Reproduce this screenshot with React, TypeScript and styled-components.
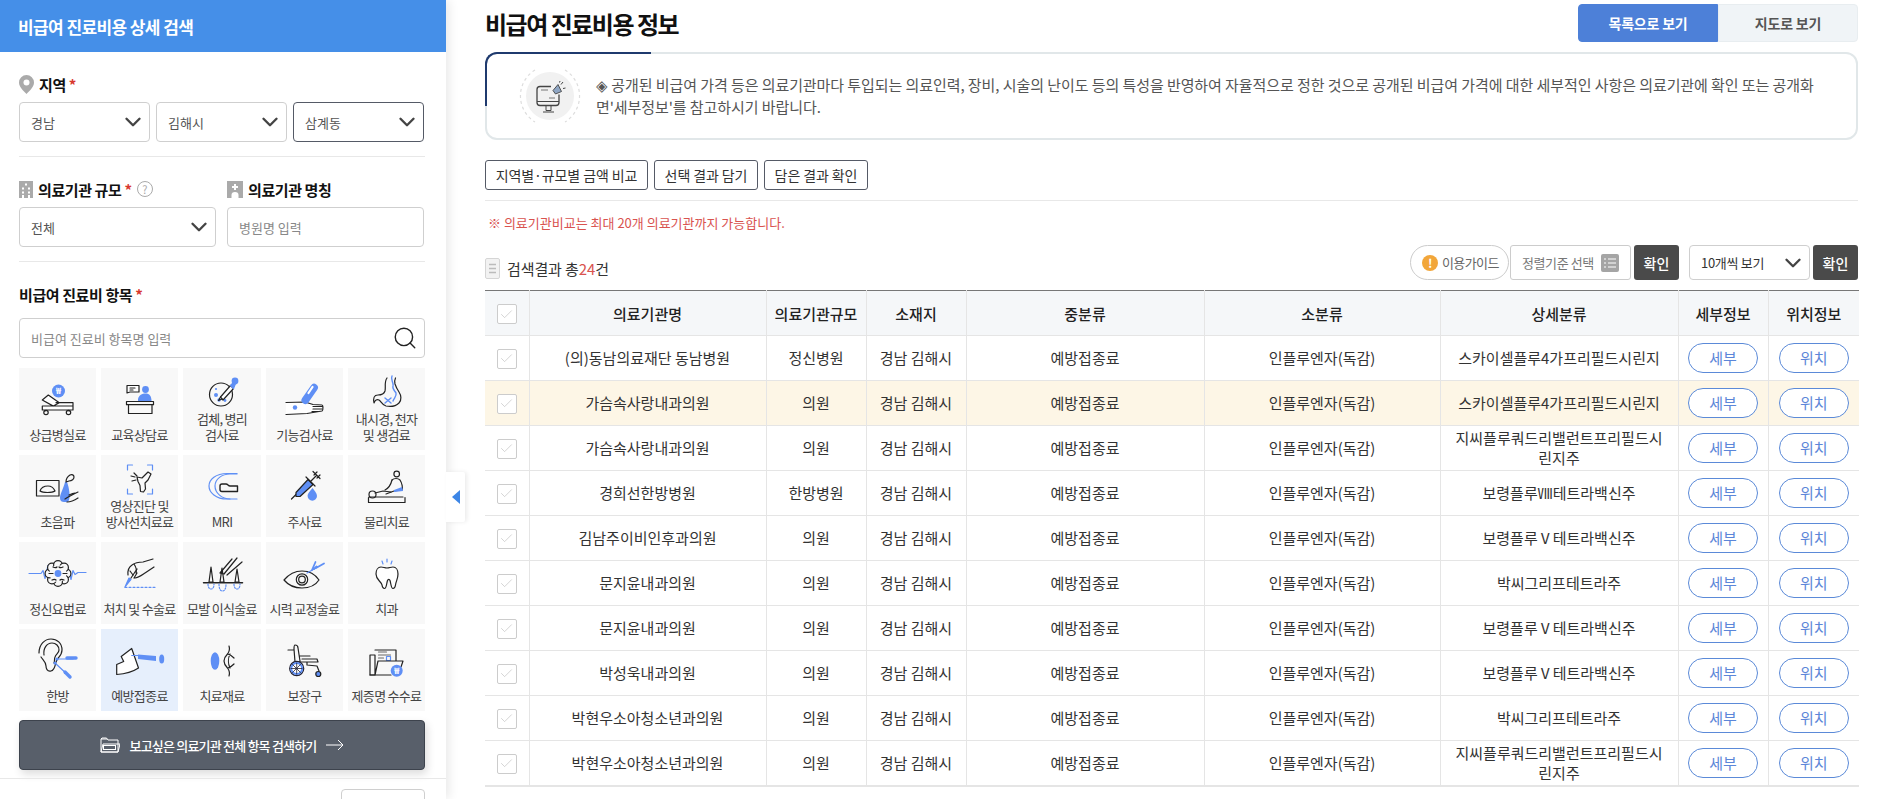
import * as React from 'react';
import styled, { createGlobalStyle } from 'styled-components';
import { ChevronDown, Search, Check } from 'lucide-react';

const BLUE = '#5f8ff5';

const GlobalStyle = createGlobalStyle`
  html, body {
    margin: 0;
    height: 100%;
    overflow: hidden;
    background: #fff;
    font-family: "Noto Sans CJK KR", "Noto Sans", sans-serif;
    color: #333;
  }
  * { box-sizing: border-box; }
`;

const Page = styled.div`
  display: flex;
  height: 799px;
  overflow: hidden;
`;

/* ---------- sidebar ---------- */

const Sidebar = styled.aside`
  position: relative;
  flex: 0 0 445px;
  background: #fff;
  box-shadow: 3px 0 10px rgba(0, 0, 0, 0.09);
`;

const SideHeader = styled.h2`
  margin: 0;
  height: 52px;
  padding-left: 18px;
  display: flex;
  align-items: center;
  background: #458fe8;
  color: #fff;
  font-size: 17px;
  font-weight: 700;
  letter-spacing: -0.6px;
`;

const SideBody = styled.div`
  padding: 20px 21px 0 19px;
`;

const Section = styled.section`
  padding-bottom: 14px;
  border-bottom: 1px solid #e8e8e8;
  margin-bottom: 20px;
`;

const Label = styled.div<{ $gap?: number }>`
  display: flex;
  align-items: center;
  height: 24px;
  gap: 5px;
  margin-bottom: ${p => p.$gap ?? 6}px;
  font-size: 15px;
  font-weight: 700;
  letter-spacing: -0.4px;
  color: #111;
`;

const Star = styled.span`
  color: #d8382e;
  font-weight: 700;
  margin-left: -2px;
`;

const Row = styled.div<{ $cols: string; $gap: number }>`
  display: grid;
  grid-template-columns: ${p => p.$cols};
  column-gap: ${p => p.$gap}px;
`;

const SelectBox = styled.div<{ $active?: boolean }>`
  height: 40px;
  display: flex;
  align-items: center;
  justify-content: space-between;
  padding: 0 3px 0 11px;
  background: #fff;
  border: 1px solid ${p => (p.$active ? '#555a66' : '#cfcfcf')};
  border-radius: 4px;
  font-size: 13px;
  color: #555;
  svg { color: #444; flex: none; }
`;

const TextInput = styled.input`
  width: 100%;
  height: 40px;
  padding: 0 11px;
  border: 1px solid #cfcfcf;
  border-radius: 4px;
  font: inherit;
  font-size: 13px;
  outline: none;
  &::placeholder { color: #888; }
`;

const SearchField = styled.div`
  display: flex;
  align-items: center;
  height: 40px;
  padding-right: 6px;
  margin-bottom: 10px;
  border: 1px solid #cfcfcf;
  border-radius: 4px;
  input {
    flex: 1;
    border: 0;
    outline: 0;
    padding: 0 11px;
    font: inherit;
    font-size: 13px;
    &::placeholder { color: #888; }
  }
  svg { color: #222; }
`;

const Grid = styled.div`
  display: grid;
  grid-template-columns: 77px 77px 78px 77px 77px;
  grid-auto-rows: 82px;
  gap: 5px;
`;

const Cell = styled.div<{ $selected?: boolean }>`
  display: flex;
  flex-direction: column;
  align-items: center;
  padding-bottom: 7px;
  background: ${p => (p.$selected ? '#e6effc' : '#f8f8f8')};
`;

const CellLabel = styled.div`
  margin-top: auto;
  font-size: 13px;
  line-height: 16px;
  letter-spacing: -0.7px;
  text-align: center;
  white-space: pre-line;
  color: #444;
`;

const IconSvg = styled.svg`
  flex: none;
  display: block;
  overflow: visible;
  fill: none;
  stroke: #222;
  stroke-width: 1.2;
  stroke-linecap: round;
  stroke-linejoin: round;
`;

const AllButton = styled.button`
  display: flex;
  align-items: center;
  justify-content: center;
  gap: 9px;
  width: 100%;
  height: 50px;
  margin-top: 9px;
  background: #585f6a;
  border: 1px solid #3d434d;
  border-radius: 4px;
  box-shadow: 2px 4px 8px rgba(0, 0, 0, 0.14);
  color: #fff;
  font: inherit;
  font-size: 13px;
  font-weight: 500;
  letter-spacing: -0.8px;
`;

const SideFooter = styled.div`
  display: flex;
  justify-content: flex-end;
  margin-top: 8px;
  padding: 10px 21px 0 0;
  border-top: 1px solid #e8e8e8;
`;

const FooterSelect = styled(SelectBox)`
  width: 84px;
  justify-content: flex-end;
`;

const CollapseTab = styled.div`
  position: absolute;
  left: 100%;
  top: 472px;
  width: 19px;
  height: 50px;
  display: flex;
  align-items: center;
  justify-content: center;
  background: #fff;
  box-shadow: 2px 0 4px rgba(0, 0, 0, 0.08);
  border-radius: 0 2px 2px 0;
`;

const TabArrow = styled.span`
  width: 0;
  height: 0;
  border-top: 7px solid transparent;
  border-bottom: 7px solid transparent;
  border-right: 8px solid #3d86e6;
`;

/* ---------- main ---------- */

const Main = styled.main`
  flex: 1;
  min-width: 0;
  padding: 4px 20px 0 39px;
`;

const TitleRow = styled.div`
  display: flex;
  align-items: center;
  justify-content: space-between;
  height: 38px;
`;

const Title = styled.h1`
  margin: 0;
  font-size: 24px;
  font-weight: 700;
  letter-spacing: -1.5px;
  color: #111;
`;

const ViewTabs = styled.div`
  display: flex;
`;

const ViewTab = styled.button<{ $on?: boolean }>`
  width: 140px;
  height: 38px;
  font: inherit;
  font-size: 14px;
  font-weight: 700;
  letter-spacing: -0.2px;
  border-radius: ${p => (p.$on ? '4px 0 0 4px' : '0 4px 4px 0')};
  border: 1px solid ${p => (p.$on ? '#4d80d8' : '#e8edf0')};
  background: ${p => (p.$on ? '#4d80d8' : '#f0f4f7')};
  color: ${p => (p.$on ? '#fff' : '#555')};
`;

const Notice = styled.div`
  position: relative;
  display: flex;
  align-items: center;
  height: 88px;
  margin-top: 10px;
  padding: 0 38px 0 32px;
  border: 2px solid #e1e7e9;
  border-radius: 12px;
  font-size: 15px;
  line-height: 22px;
  color: #555;
  letter-spacing: -0.07px;
  &::before {
    content: '';
    position: absolute;
    left: -2px;
    top: -2px;
    width: 164px;
    height: 52px;
    border-top: 2px solid #1f3a6e;
    border-left: 2px solid #1f3a6e;
    border-top-left-radius: 12px;
    pointer-events: none;
  }
`;

const NoticeIcon = styled.div`
  flex: none;
  width: 62px;
  height: 62px;
  margin-right: 15px;
`;

const NoticeText = styled.p`
  margin: 0;
  flex: 1;
  word-break: break-all;
`;

const Actions = styled.div`
  display: flex;
  gap: 6px;
  margin-top: 20px;
  padding-bottom: 10px;
  border-bottom: 1px solid #e8e8e8;
`;

const ActionButton = styled.button<{ $w: number }>`
  width: ${p => p.$w}px;
  height: 30px;
  padding: 0;
  background: #fff;
  border: 1px solid #555a66;
  border-radius: 3px;
  font: inherit;
  font-size: 14px;
  letter-spacing: -0.1px;
  color: #333;
`;

const Warning = styled.p`
  margin: 12px 0 0 3px;
  font-size: 13px;
  line-height: 19px;
  color: #d9534f;
`;

const ToolRow = styled.div`
  display: flex;
  align-items: center;
  justify-content: space-between;
  height: 35px;
  margin-top: 13px;
  margin-bottom: 10px;
`;

const ResultCount = styled.div`
  display: flex;
  align-items: center;
  gap: 6px;
  padding-top: 11px;
  font-size: 15px;
  letter-spacing: -0.1px;
  em { color: #d9534f; font-style: normal; }
`;

const Tools = styled.div`
  display: flex;
  align-items: center;
`;

const GuidePill = styled.div`
  display: flex;
  align-items: center;
  gap: 4px;
  width: 99px;
  height: 35px;
  padding-left: 11px;
  border: 1px solid #ccc;
  border-radius: 18px;
  font-size: 13px;
  letter-spacing: -0.6px;
  color: #666;
`;

const GuideMark = styled.span`
  width: 16px;
  height: 16px;
  border-radius: 50%;
  background: #f2a63a;
  color: #fff;
  font-size: 12px;
  font-weight: 700;
  line-height: 16px;
  text-align: center;
`;

const SortBox = styled.div`
  display: flex;
  align-items: center;
  justify-content: space-between;
  width: 121px;
  height: 35px;
  margin-left: 1px;
  padding: 0 11px;
  border: 1px solid #ccc;
  border-radius: 3px;
  font-size: 13px;
  letter-spacing: -0.4px;
  color: #777;
`;

const SortMark = styled.span`
  flex: none;
  width: 18px;
  height: 18px;
  display: flex;
  align-items: center;
  justify-content: center;
  border-radius: 2px;
  background: #a5a5a5;
`;

const ConfirmButton = styled.button`
  width: 45px;
  height: 35px;
  margin-left: 3px;
  background: #4a4a4a;
  border: 0;
  border-radius: 3px;
  color: #fff;
  font: inherit;
  font-size: 14px;
  font-weight: 500;
`;

const PageSize = styled(SelectBox)`
  width: 121px;
  height: 35px;
  margin-left: 10px;
  font-size: 13px;
  letter-spacing: -0.3px;
  color: #333;
`;

const Table = styled.table`
  width: 100%;
  table-layout: fixed;
  border-collapse: collapse;
  border-top: 1px solid #777;
  border-bottom: 2px solid #e5e5e5;
  font-size: 15px;
`;

const Th = styled.th`
  height: 45px;
  padding: 0;
  background: #f5f7f9;
  border: 1px solid #e5e5e5;
  border-top: 0;
  font-weight: 500;
  color: #222;
  &:first-child { border-left: 0; }
  &:last-child { border-right: 0; }
`;

const Tr = styled.tr<{ $hot?: boolean }>`
  background: ${p => (p.$hot ? '#fdf6e6' : '#fff')};
`;

const Td = styled.td`
  height: 45px;
  padding: 0 15px;
  border: 1px solid #e5e5e5;
  text-align: center;
  line-height: 20px;
  word-break: break-all;
  color: #333;
  &:first-child { border-left: 0; padding: 0; }
  &:last-child { border-right: 0; }
`;

const TightTd = styled(Td)`
  padding: 0;
`;

const CheckMark = styled.span`
  display: inline-flex;
  align-items: center;
  justify-content: center;
  vertical-align: middle;
  width: 20px;
  height: 20px;
  background: #fff;
  border: 1px solid #ccc;
  border-radius: 2px;
  svg { color: #bbb; }
`;

const PillButton = styled.button`
  display: block;
  margin: 0 auto;
  width: 70px;
  height: 30px;
  padding: 0;
  background: #fff;
  border: 1px solid #5b8ad8;
  border-radius: 15px;
  font: inherit;
  font-size: 15px;
  color: #5c86d8;
`;

const HelpMark = styled.span`
  width: 16px;
  height: 16px;
  border: 1px solid #aaa;
  border-radius: 50%;
  color: #aaa;
  font-size: 11px;
  font-weight: 400;
  line-height: 14px;
  text-align: center;
`;

/* ---------- drawings ---------- */

const Icon: React.FC<{ children: React.ReactNode }> = ({ children }) => (
  <IconSvg width="77" height="42" viewBox="0 0 77 42">{children}</IconSvg>
);

const Coin: React.FC<{ cx: number; cy: number; r: number }> = ({ cx, cy, r }) => (
  <>
    <circle cx={cx} cy={cy} r={r} fill={BLUE} stroke="none" />
    <text x={cx} y={cy + 3} fontSize="8.5" fontWeight="700" textAnchor="middle" fill="#fff" stroke="none">₩</text>
  </>
);

const BRAIN_LOBES = [0, 45, 90, 135, 180, 225, 270, 315];

const ICONS: Record<string, React.ReactNode> = {
  ward: (
    <>
      <Coin cx={39.5} cy={23} r={6.5} />
      <path d="M23.3 32l6-5 11 7.700-6 3.300zM37 34.700h17V38H34M23.3 38H54v4H23.3zM26 42v1M50 42v1M25 33l9 5" fill="#fff" />
      <circle cx={27} cy={44.5} r={2.2} />
      <circle cx={49.5} cy={44.5} r={2.2} />
    </>
  ),
  counsel: (
    <>
      <path d="M26 17.500h12v6.500h-9l-3 1zM29 20h5M29 22h3" fill="#fff" />
      <circle cx={44.5} cy={21.5} r={3.4} fill={BLUE} stroke="none" />
      <path d="M37 31c1-4 4-5.500 7.500-5.500 4 0 6 2.500 6 8H37z" fill={BLUE} stroke="none" />
      <path d="M25.500 33.500h27v3.200h-27zM27.500 36.700V45.500H51V36.700" />
    </>
  ),
  specimen: (
    <>
      <circle cx={37} cy={26.5} r={11.5} />
      <circle cx={32} cy={27} r={2} fill={BLUE} stroke="none" />
      <circle cx={35} cy={32} r={1.7} fill={BLUE} stroke="none" />
      <circle cx={41} cy={32.5} r={1.4} fill={BLUE} stroke="none" />
      <circle cx={32} cy={21} r={1.1} fill={BLUE} stroke="none" />
      <path d="M36.500 29l10-11.500 3 3L39 32z" fill="#fff" />
      <path d="M36.500 29l-2 3.500 3.500-1.500" />
      <path d="M46.500 17.500l3.500-3.500 1.500 1.500-2 5z" fill={BLUE} stroke={BLUE} />
      <circle cx={51} cy={13} r={3.4} fill={BLUE} stroke="none" />
    </>
  ),
  function: (
    <>
      <path d="M20 34.500l19-.5 8 2.500 9 .5c1 0 1.500 5 0 6l-9 1.500-6 1-21 1" fill="#fff" />
      <path d="M47 38.500h9.500M47 41h9M46 43.500h6" />
      <rect x={-3.8} y={-11} width={7.6} height={23} rx={3.8} transform="translate(44 25.500) rotate(35)" fill={BLUE} stroke="none" />
      <path d="M42.500 25l4-6" stroke="#fff" strokeWidth="2.2" />
      <circle cx={29} cy={39.5} r={2.2} fill={BLUE} stroke="none" />
    </>
  ),
  scope: (
    <>
      <path d="M39 10c-3 4-1 9-2 13-1 3-4 4-7 4-4 0-5 3-4 8 1-3 3-4 5-3 2 1 3 5 7 6 5 1 10 0 13-3 3-3 2-8 0-11-2-3-3-5-4-8-.500-2-.500-4 .500-6" />
      <path d="M44 8c-2 4 2 6 1 10-1 3 2 5 3 7 1 3-2 5-3 8M37 30l6 5M43 30l-6 5" stroke={BLUE} strokeWidth="1.400" />
    </>
  ),
  ultrasound: (
    <>
      <rect x={17.5} y={25.5} width={22.5} height={15.5} />
      <path d="M21 36c1-3 3-5 8-5s6 3 7 5c-3 2-12 2-15 0z" />
      <path d="M46 27c-1 5-5 12-5 16 0 3 2 4 4 4h3c4 0 3-12 0-20z" fill={BLUE} stroke="none" />
      <path d="M47 27c0-3 1-5 4-7 2-1 4 0 4 2s-2 4-5 4zM46 44c4-2 8-5 13-7M50 40c2-1 4-2 6-2M48 47c4 0 8-2 11-4" />
    </>
  ),
  imaging: (
    <>
      <path d="M26.500 15v-5h5M46.500 10h5v5M26.500 34v5h5M46.500 39h5v-5" stroke={BLUE} />
      <path d="M36 22l5 1 6-6 3 2-3 6-3 3 .5 6-2 3-3-.5-.5-6-2-4zM33 18l3 3M30 21l4 1M31 26l4-1" />
    </>
  ),
  mri: (
    <>
      <path d="M53 18.500H43c-11 0-18 6-18 12.500s7 13 18 13h10" stroke={BLUE} />
      <path d="M53 19H46c-8 0-15 5-15 12s7 13 15 13" stroke={BLUE} />
      <path d="M36 31c0-1.500 1-2 2-2h4c2 0 2 2 4 2h7.500v5.500H38c-1 0-2-1-2-2z" strokeWidth="1.400" fill="#f8f8f8" />
    </>
  ),
  injection: (
    <>
      <path d="M25.500 44l5-5" />
      <path d="M30 37.500l12-13 5 5-13 12-4 0z" fill={BLUE} />
      <path d="M40 22l9 9M45 26l5-5M47 16.500l7 7M51 17l-3 3M54 20l-3 3" />
      <path d="M46.500 33c2 3 4.500 5 4.500 8a4.700 4.700 0 01-9.400 0c0-3 2.900-5 4.900-8z" fill={BLUE} stroke="none" />
    </>
  ),
  physical: (
    <>
      <circle cx={48.7} cy={19} r={2.8} />
      <path d="M44 25c2-2 6-2 8 0 2 3 3 8 2 10l-8 1-8 3" fill="#f8f8f8" />
      <path d="M46 35l8-3 1 4-9 1z" fill={BLUE} stroke="none" />
      <path d="M44 25c-1 4-3 8-7 10" />
      <circle cx={24.5} cy={39.5} r={3.5} />
      <path d="M27 38l8-2 8 1M21 42h34M20.500 42.500v5h36.500v-5" />
    </>
  ),
  mental: (
    <>
      <path d="M10 31.500h12l2-3 2 8 3-13 2 8M47 31.500l2-6 3 12 2-9 2 4 3-2 8 0" stroke={BLUE} />
      {BRAIN_LOBES.map(deg => (
        <circle
          key={deg}
          cx={39 + 8.5 * Math.cos((deg * Math.PI) / 180)}
          cy={31.5 + 8.5 * Math.sin((deg * Math.PI) / 180)}
          r={4.4}
          fill="#f8f8f8"
        />
      ))}
      <circle cx={39} cy={31.5} r={8.6} fill="#f8f8f8" stroke="none" />
      <path d="M34 25c2 1 3 1 4 0M44 25c-2 1-3 1-4 0M33 38c2-1 3-1 4 0M45 38c-2-1-3-1-4 0M30 31.500h4M44 31.500h4" />
      <circle cx={39} cy={31.5} r={3.4} fill={BLUE} stroke="none" />
    </>
  ),
  surgery: (
    <>
      <path d="M24 45l4-9 2 1.500z" fill={BLUE} stroke={BLUE} />
      <path d="M30 36l6-9" />
      <path d="M27 33c-.5-4 1-8 4-10 4-3 8-3 11-3l10-3M34 36c3 0 7-3 10-5l9-6M29 29l3 4M33 22c2 3 3 6 2 9M36 31l-3 5" />
      <path d="M24 45.300h32" stroke={BLUE} strokeDasharray="2 2" />
    </>
  ),
  hair: (
    <>
      <path d="M19.500 40.800h39" strokeWidth="1.500" />
      <path d="M25 40l2-15 2 15zM36 40l2-14 2 14zM51 40l2-13 2 13z" />
      <path d="M36 31l12-14M40 32l13-16M43 33l15-13M36 31l4 1" />
      <path d="M24 42c0 3 1 5 3 5s3-2 3-5M35 42c0 4 1 7 3.500 7S42 46 42 42M50 42c0 3 1 5 3 5s3-2 3-5" stroke={BLUE} strokeDasharray="1.500 1.500" />
    </>
  ),
  vision: (
    <>
      <path d="M18 38c5-6 11-9 18-9s13 3 17 9c-4 6-10 8-17 8s-13-2-18-8z" />
      <circle cx={36} cy={37.5} r={5.7} />
      <circle cx={36} cy={37.5} r={3.3} />
      <path d="M41 31l9-5" stroke={BLUE} />
      <path d="M46 28l3.500-8M50 26l8-4.500M48 27l2.500-2.500" stroke={BLUE} strokeWidth="1.800" />
    </>
  ),
  dental: (
    <>
      <path d="M34 19l1 3M39 17v3M44 19l-1 3" stroke={BLUE} />
      <path d="M33 25c2 0 4 1 6 1s4-1 6-1c3 0 5 3 5 7 0 5-2 7-2.500 11-.3 2-1 3.500-2.500 3.500-2 0-2-5-3-8-.5-1.500-2-1.500-2.500 0-1 3-1 8-3 8-1.500 0-2.200-1.500-2.500-3.500C33 39 28 38 28 32c0-4 2-7 5-7z" fill="#fff" />
    </>
  ),
  oriental: (
    <>
      <path d="M20 24c0-9 6-14 12-14s11 4 11 11c0 6-5 8-6 12-1 3-1 8-5 9s-5-3-5-5c0-4-3-6-5-9" fill="#f8f8f8" />
      <path d="M25 26c-1-7 3-12 8-12 4 0 7 3 7 7 0 3-3 4-4 7-1 2 0 4-1 6" />
      <path d="M38 30h16" stroke={BLUE} />
      <path d="M48 29h9" stroke={BLUE} strokeWidth="3.400" />
      <circle cx={38} cy={30} r={1.6} fill={BLUE} stroke="none" />
      <circle cx={36} cy={34} r={1.6} fill={BLUE} stroke="none" />
      <path d="M36 34l14 13" stroke={BLUE} />
      <path d="M46 43l5 5" stroke={BLUE} strokeWidth="3.400" />
    </>
  ),
  vaccine: (
    <>
      <path d="M15.700 35.500l7-3-2.500-5 10.500-8 6.800 19.500c-6 4-15 6-21.800 6.500z" fill="#fff" />
      <path d="M30.700 26.500h8" stroke={BLUE} />
      <path d="M37 25.500l18 1.500v5l-18-2z" fill={BLUE} stroke="none" />
      <ellipse cx={60.7} cy={30} rx={2.5} ry={4.5} fill={BLUE} stroke="none" />
    </>
  ),
  material: (
    <>
      <ellipse cx={31} cy={32} rx={4.3} ry={8.7} fill={BLUE} stroke="none" />
      <path d="M45 17c1 3 0 6-1.500 8-2 2-3.500 4-3.500 7s1.500 5 3.500 7c1.500 2 2.500 5 1.500 8M44 25c3 1 5 3 6 4M44 39c3-1 5-3 6-4M46 25c-2 4-2 10 0 14" />
    </>
  ),
  gear: (
    <>
      <path d="M22 21h6M29 16c2 0 3 1 3 3l2 13M29 16c-1 0-1 2-1 4l1 13M34 27h10M36 30h15l1 3H33l8 0v3l10 1 2 5" />
      <circle cx={30.7} cy={39.5} r={7} stroke="#223" strokeWidth="1.300" fill="#fff" />
      <circle cx={30.7} cy={39.5} r={5.5} stroke={BLUE} strokeWidth="2" />
      <path d="M26.500 35.500l8 8M34.500 35.500l-8 8M30.700 34v11M25 39.500h11" stroke="#223" strokeWidth=".8" />
      <circle cx={52.3} cy={45} r={2.5} fill={BLUE} />
    </>
  ),
  document: (
    <>
      <path d="M27 21h21v20" />
      <path d="M30.500 23h8M30.500 26h12M30.500 29h5" stroke="#666" />
      <rect x={38.5} y={27.5} width={4} height={4} stroke={BLUE} />
      <path d="M22 26h5v20h-5zM27 46l3-14h25l-2 6" fill="#f8f8f8" />
      <path d="M22 46h21" />
      <Coin cx={48.7} cy={41.7} r={6} />
    </>
  ),
};

const PinIcon = () => (
  <svg width="15" height="19" viewBox="0 0 15 19">
    <path d="M7.500 0A7.500 7.500 0 000 7.500C0 12 4.500 16 7.500 19c3-3 7.500-7 7.500-11.500A7.500 7.500 0 007.500 0z" fill="#aaa" />
    <circle cx="7.5" cy="7.5" r="3" fill="#fff" />
  </svg>
);

const BuildingIcon = () => (
  <svg width="14" height="17" viewBox="0 0 14 17">
    <rect width="14" height="17" fill="#aaa" />
    <path d="M6 2.500h2v2H6zM3 6.500h2v2H3zM9 6.500h2v2H9zM3 10.500h2v2H3zM9 10.500h2v2H9zM3 14h2v3H3zM9 14h2v3H9z" fill="#fff" />
  </svg>
);

const HospitalIcon = () => (
  <svg width="16" height="17" viewBox="0 0 16 17">
    <rect width="16" height="17" fill="#aaa" />
    <path d="M7 3h2v2h2v2H9v2H7V7H5V5h2zM4.500 17v-3a3.500 3 0 017 0v3z" fill="#fff" />
  </svg>
);

const DocIcon = () => (
  <svg width="16" height="21" viewBox="0 0 16 21" fill="none">
    <rect x=".5" y=".5" width="14" height="20" rx="1.500" fill="#f2f2f2" stroke="#d5d5d5" />
    <path d="M4 6.500h7M4 10.500h7M4 14.500h7" stroke="#bbb" strokeWidth="1.300" />
  </svg>
);

const FolderIcon = () => (
  <svg width="20" height="16" viewBox="0 0 20 16" fill="none" stroke="#fff" strokeWidth="1">
    <path d="M1 4V15h17V3H8L6.500 1H2L1 2zM1 2h6M3 7h17l-2 8H1z" />
    <rect x="3.5" y="8.5" width="12" height="4" />
  </svg>
);

const LongArrow = () => (
  <svg width="18" height="12" viewBox="0 0 18 12" fill="none" stroke="#fff" strokeWidth="1">
    <path d="M0 6h17M12 1l5 5-5 5" />
  </svg>
);

const NoticeDrawing = () => (
  <NoticeIcon>
    <svg width="62" height="62" viewBox="0 0 62 62" fill="none">
      <path d="M16 5A30.500 30.500 0 0016 57M46 5a30.500 30.500 0 010 52" stroke="#ddd" strokeWidth="1.200" strokeDasharray="3 3" />
      <circle cx="31" cy="31" r="24" fill="#f1f1f1" />
      <path d="M32 21.500H21a3 3 0 00-3 3v13a3 3 0 003 3h16a3 3 0 003-3v-8" stroke="#444" strokeWidth="1.300" />
      <path d="M18 36.500h22M27 41v4.500h5V41M24 47h11" stroke="#444" strokeWidth="1" />
      <path d="M22 25h7M30 33h6" stroke="#777" strokeWidth="1" />
      <path d="M34 25.500l5-6 3.500 7-6 2.500z" fill="#8fa6c4" stroke="#444" strokeWidth=".9" />
      <path d="M42 19.500l2-2.500M44 23.500l2.500-.5M40.500 17.500l.5-1.500" stroke="#444" />
    </svg>
  </NoticeIcon>
);

const ListIcon = () => (
  <svg width="12" height="10" viewBox="0 0 12 10" stroke="#fff" strokeWidth="1.200">
    <path d="M0 1h2M4 1h8M0 5h2M4 5h8M0 9h2M4 9h8" />
  </svg>
);

/* ---------- data ---------- */

const CATEGORIES = [
  ['ward', '상급병실료'], ['counsel', '교육상담료'], ['specimen', '검체, 병리\n검사료'], ['function', '기능검사료'], ['scope', '내시경, 천자\n및 생검료'],
  ['ultrasound', '초음파'], ['imaging', '영상진단 및\n방사선치료료'], ['mri', 'MRI'], ['injection', '주사료'], ['physical', '물리치료'],
  ['mental', '정신요법료'], ['surgery', '처치 및 수술료'], ['hair', '모발 이식술료'], ['vision', '시력 교정술료'], ['dental', '치과'],
  ['oriental', '한방'], ['vaccine', '예방접종료'], ['material', '치료재료'], ['gear', '보장구'], ['document', '제증명 수수료'],
];

const SKY = '스카이셀플루4가프리필드시린지';
const GC = '지씨플루쿼드리밸런트프리필드시린지주';
const BR = '보령플루Ⅴ테트라백신주';
const PARK = '박씨그리프테트라주';

const ROWS = [
  ['(의)동남의료재단 동남병원', '정신병원', SKY],
  ['가슴속사랑내과의원', '의원', SKY],
  ['가슴속사랑내과의원', '의원', GC],
  ['경희선한방병원', '한방병원', '보령플루Ⅷ테트라백신주'],
  ['김남주이비인후과의원', '의원', BR],
  ['문지윤내과의원', '의원', PARK],
  ['문지윤내과의원', '의원', BR],
  ['박성욱내과의원', '의원', BR],
  ['박현우소아청소년과의원', '의원', PARK],
  ['박현우소아청소년과의원', '의원', GC],
];

const COLUMNS: [string, number][] = [
  ['', 44], ['의료기관명', 237], ['의료기관규모', 100], ['소재지', 100], ['중분류', 238],
  ['소분류', 236], ['상세분류', 238], ['세부정보', 90], ['위치정보', 91],
];

const Chevron = () => <ChevronDown size={26} strokeWidth={2.2} />;

const Tick = () => (
  <CheckMark><Check size={15} strokeWidth={1} /></CheckMark>
);

const App: React.FC = () => (
  <Page>
    <GlobalStyle />
    <Sidebar>
      <SideHeader>비급여 진료비용 상세 검색</SideHeader>
      <SideBody>
        <Section>
          <Label><PinIcon />지역 <Star>*</Star></Label>
          <Row $cols="131px 131px 131px" $gap={6}>
            <SelectBox>경남<Chevron /></SelectBox>
            <SelectBox>김해시<Chevron /></SelectBox>
            <SelectBox $active>삼계동<Chevron /></SelectBox>
          </Row>
        </Section>
        <Section>
          <Row $cols="197px 197px" $gap={11}>
            <Label><BuildingIcon />의료기관 규모 <Star>*</Star><HelpMark>?</HelpMark></Label>
            <Label><HospitalIcon />의료기관 명칭</Label>
            <SelectBox>전체<Chevron /></SelectBox>
            <TextInput placeholder="병원명 입력" />
          </Row>
        </Section>
        <Label $gap={12}>비급여 진료비 항목 <Star>*</Star></Label>
        <SearchField>
          <input placeholder="비급여 진료비 항목명 입력" />
          <Search size={26} strokeWidth={1.3} />
        </SearchField>
        <Grid>
          {CATEGORIES.map(([key, label]) => (
            <Cell key={key} $selected={key === 'vaccine'}>
              <Icon>{ICONS[key]}</Icon>
              <CellLabel>{label}</CellLabel>
            </Cell>
          ))}
        </Grid>
        <AllButton>
          <FolderIcon />
          보고싶은 의료기관 전체 항목 검색하기
          <LongArrow />
        </AllButton>
      </SideBody>
      <SideFooter>
        <FooterSelect><Chevron /></FooterSelect>
      </SideFooter>
      <CollapseTab><TabArrow /></CollapseTab>
    </Sidebar>

    <Main>
      <TitleRow>
        <Title>비급여 진료비용 정보</Title>
        <ViewTabs>
          <ViewTab $on>목록으로 보기</ViewTab>
          <ViewTab>지도로 보기</ViewTab>
        </ViewTabs>
      </TitleRow>

      <Notice>
        <NoticeDrawing />
        <NoticeText>
          ◈ 공개된 비급여 가격 등은 의료기관마다 투입되는 의료인력, 장비, 시술의 난이도 등의 특성을 반영하여 자율적으로 정한 것으로 공개된 비급여 가격에 대한 세부적인 사항은 의료기관에 확인 또는 공개화면'세부정보'를 참고하시기 바랍니다.
        </NoticeText>
      </Notice>

      <Actions>
        <ActionButton $w={163}>지역별·규모별 금액 비교</ActionButton>
        <ActionButton $w={104}>선택 결과 담기</ActionButton>
        <ActionButton $w={104}>담은 결과 확인</ActionButton>
      </Actions>

      <Warning>※ 의료기관비교는 최대 20개 의료기관까지 가능합니다.</Warning>

      <ToolRow>
        <ResultCount><DocIcon /><span>검색결과 총<em>24</em>건</span></ResultCount>
        <Tools>
          <GuidePill><GuideMark>!</GuideMark>이용가이드</GuidePill>
          <SortBox>정렬기준 선택<SortMark><ListIcon /></SortMark></SortBox>
          <ConfirmButton>확인</ConfirmButton>
          <PageSize>10개씩 보기<Chevron /></PageSize>
          <ConfirmButton>확인</ConfirmButton>
        </Tools>
      </ToolRow>

      <Table>
        <colgroup>
          {COLUMNS.map(([name, width]) => <col key={name} width={width} />)}
        </colgroup>
        <thead>
          <tr>
            {COLUMNS.map(([name]) => (
              <Th key={name}>{name || <Tick />}</Th>
            ))}
          </tr>
        </thead>
        <tbody>
          {ROWS.map(([name, size, detail], i) => (
            <Tr key={i} $hot={i === 1}>
              <Td><Tick /></Td>
              <Td>{name}</Td>
              <Td>{size}</Td>
              <TightTd>경남 김해시</TightTd>
              <Td>예방접종료</Td>
              <Td>인플루엔자(독감)</Td>
              <Td>{detail}</Td>
              <TightTd><PillButton>세부</PillButton></TightTd>
              <TightTd><PillButton>위치</PillButton></TightTd>
            </Tr>
          ))}
        </tbody>
      </Table>
    </Main>
  </Page>
);

export default App;
